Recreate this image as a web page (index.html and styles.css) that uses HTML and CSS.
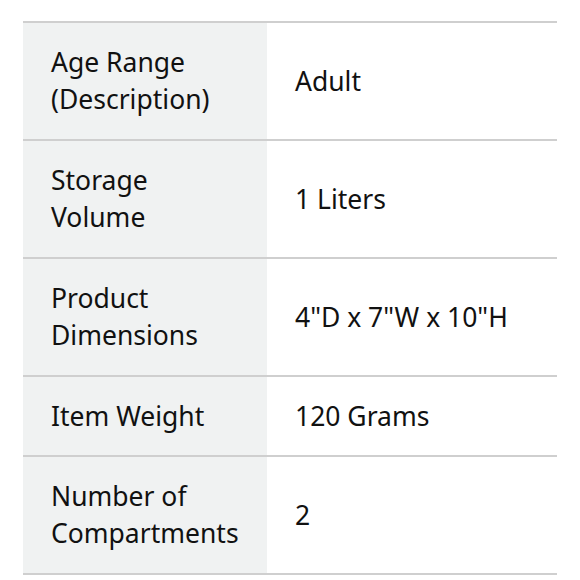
FILE: index.html
```html
<!DOCTYPE html>
<html>
<head>
<meta charset="utf-8">
<link rel="stylesheet" href="styles.css">
</head>
<body>
<table class="specs">
  <tr><th>Age Range (Description)</th><td>Adult</td></tr>
  <tr><th>Storage Volume</th><td>1 Liters</td></tr>
  <tr><th>Product Dimensions</th><td>4"D x 7"W x 10"H</td></tr>
  <tr class="single"><th>Item Weight</th><td>120 Grams</td></tr>
  <tr><th>Number of Compartments</th><td>2</td></tr>
</table>
</body>
</html>
```
FILE: styles.css
```css
html, body {
  margin: 0;
  background: #fff;
}
body {
  padding: 21px 23px 0 23px;
  font-family: "Noto Sans", sans-serif;
  color: #111;
}
.specs {
  width: 534px;
  border-collapse: collapse;
  font-size: 26.5px;
  line-height: 37px;
}
.specs tr {
  border-top: 2px solid #cfcfcf;
  border-bottom: 2px solid #cfcfcf;
}
.specs th, .specs td {
  text-align: left;
  font-weight: normal;
  vertical-align: middle;
  padding: 21px 28px 21px 28px;
}
.specs .single th, .specs .single td {
  padding: 21px 28px 20px 28px;
}
.specs th {
  width: 188px;
  background: #f0f2f2;
}
```
